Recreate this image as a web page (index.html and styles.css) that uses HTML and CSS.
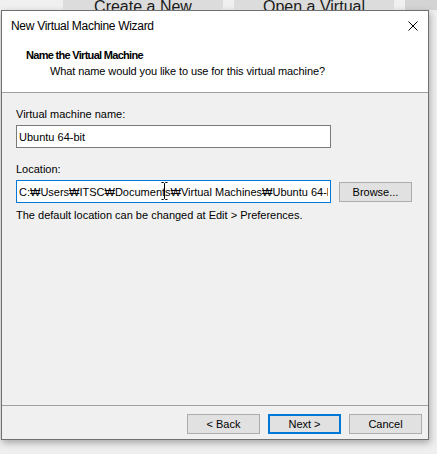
FILE: index.html
```html
<!DOCTYPE html>
<html lang="en">
<head>
  <meta charset="UTF-8">
  <meta name="viewport" content="width=device-width, initial-scale=1.0">
  <title>New Virtual Machine Wizard</title>
  <link rel="stylesheet" href="styles.css">
</head>
<body>
  <!-- Main window buttons, mostly hidden behind the wizard -->
  <div class="app-strip">
    <div class="app-btn">Create a New</div>
    <div class="app-btn">Open a Virtual</div>
  </div>

  <div class="dialog">
    <div class="titlebar">
      <span class="title">New Virtual Machine Wizard</span>
      <svg class="close" width="10" height="10" viewBox="0 0 10 10">
        <path d="M0.5 0.5 L9.5 9.5 M9.5 0.5 L0.5 9.5" stroke="#000" stroke-width="1" fill="none"/>
      </svg>
    </div>

    <div class="wizard-header">
      <div class="step-title">Name the Virtual Machine</div>
      <div class="step-desc">What name would you like to use for this virtual machine?</div>
    </div>

    <div class="wizard-body">
      <label class="field-label" for="vmName">Virtual machine name:</label>
      <input id="vmName" class="text-input name-input" type="text" value="Ubuntu 64-bit">

      <label class="field-label location-label" for="vmLocation">Location:</label>
      <div class="location-row">
        <div class="location-box">
          <input id="vmLocation" class="text-input focused" type="text" value="C:₩Users₩ITSC₩Documents₩Virtual Machines₩Ubuntu 64-bit">
          <!-- mouse pointer (text select) -->
          <svg class="ibeam" width="7" height="18" viewBox="0 0 7 18">
            <path d="M0.5 0.5 H2.5 L3.5 1.5 L4.5 0.5 H6.5 M3.5 1.5 V16.5 M0.5 17.5 H2.5 L3.5 16.5 L4.5 17.5 H6.5" stroke="#000" stroke-width="1" fill="none"/>
          </svg>
        </div>
        <button class="btn">Browse...</button>
      </div>

      <div class="hint">The default location can be changed at Edit &gt; Preferences.</div>
    </div>

    <div class="wizard-footer">
      <button class="btn">&lt; Back</button>
      <button class="btn btn-default">Next &gt;</button>
      <button class="btn">Cancel</button>
    </div>
  </div>
</body>
</html>
```

FILE: styles.css
```css
body {
  margin: 0;
  width: 437px;
  height: 454px;
  overflow: hidden;
  background-color: #efefef;
  font-family: "Liberation Sans", "Noto Sans", sans-serif;
  font-size: 11px;
  color: #000;
}

/* strip of the main window above the dialog */
.app-strip {
  height: 10px;
  display: flex;
  gap: 11px;
  padding-left: 63px;
  overflow: hidden;
  background: linear-gradient(to right, #f0f0f0 0, #f0f0f0 405px, #d4d4d4 405px);
}
.app-btn {
  width: 160px;
  height: 30px;
  background-color: #dcdcdc;
  font-size: 16px;
  line-height: 13px;
  text-align: center;
  color: #1a1a1a;
}

.dialog {
  margin-left: 1px;
  width: 426px;
  height: 428px;
  display: flex;
  flex-direction: column;
  border: 1px solid #707070;
  background-color: #f0f0f0;
  box-shadow: 1px 3px 7px rgba(0, 0, 0, 0.3);
}

.titlebar {
  height: 30px;
  display: flex;
  align-items: center;
  justify-content: space-between;
  padding: 0 10px 0 9px;
  background-color: #fff;
}
.title {
  font-size: 12px;
  letter-spacing: -0.3px;
}
.close {
  margin-top: -1px;
}

.wizard-header {
  height: 52px;
  box-sizing: border-box;
  padding: 6px 0 14px 24px;
  background-color: #fff;
  border-bottom: 1px solid #a0a0a0;
  line-height: 16px;
}
.step-title {
  font-weight: bold;
  letter-spacing: -0.7px;
}
.step-desc {
  padding-left: 24px;
  letter-spacing: -0.1px;
}

.wizard-body {
  flex: 1;
  display: flex;
  flex-direction: column;
  align-items: flex-start;
  padding: 13px 14px 0 14px;
  line-height: 16px;
}
.field-label {
  margin-bottom: 3px;
}
.location-label {
  margin-top: 13px;
}

.text-input {
  width: 315px;
  height: 23px;
  box-sizing: border-box;
  margin: 0;
  padding: 0 2px;
  border: 1px solid #7a7a7a;
  background-color: #fff;
  font: inherit;
  color: #000;
  outline: none;
}
.text-input.focused {
  border-color: #0078d7;
}

.location-row {
  display: flex;
  align-items: center;
  gap: 8px;
}
.location-box {
  position: relative;
  height: 23px;
}
.ibeam {
  position: absolute;
  left: 145px;
  top: 2px;
}

.hint {
  margin-top: 4px;
}

.btn {
  width: 73px;
  height: 20px;
  box-sizing: border-box;
  margin: 0;
  padding: 0;
  background-color: #e1e1e1;
  border: 1px solid #adadad;
  font: inherit;
  color: #000;
}
.btn-default {
  border: 2px solid #0078d7;
}

.wizard-footer {
  height: 34px;
  box-sizing: border-box;
  display: flex;
  justify-content: flex-end;
  align-items: flex-start;
  gap: 8px;
  padding: 8px 6px 0 0;
  border-top: 1px solid #a0a0a0;
}
```
